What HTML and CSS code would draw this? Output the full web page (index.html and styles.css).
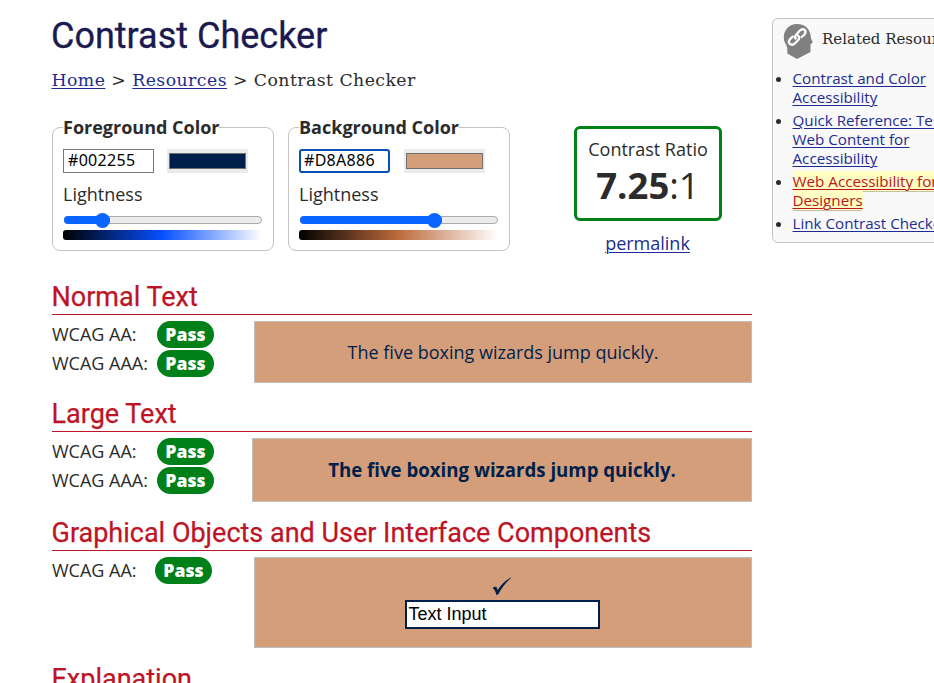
FILE: index.html
```html
<!DOCTYPE html>
<html lang="en">
<head>
<meta charset="utf-8">
<title>Contrast Checker</title>
<link rel="stylesheet" href="styles.css">
</head>
<body>
<div class="page">
  <main class="main">
    <h1>Contrast Checker</h1>
    <nav class="crumbs"><a href="#">Home</a> &gt; <a href="#">Resources</a> &gt; Contrast Checker</nav>
    <div class="controls">
      <fieldset class="color fg">
        <legend>Foreground Color</legend>
        <div class="pick"><div class="hex">#002255</div><div class="well"><div class="swatch"></div></div></div>
        <div class="label">Lightness</div>
        <div class="slider"><div class="fill"><span class="thumb"></span></div></div>
        <div class="ramp"></div>
      </fieldset>
      <fieldset class="color bg">
        <legend>Background Color</legend>
        <div class="pick"><div class="hex focused">#D8A886</div><div class="well"><div class="swatch"></div></div></div>
        <div class="label">Lightness</div>
        <div class="slider"><div class="fill"><span class="thumb"></span></div></div>
        <div class="ramp"></div>
      </fieldset>
      <div class="result">
        <div class="ratio"><div class="ratio-label">Contrast Ratio</div><div class="ratio-value"><b>7.25</b>:1</div></div>
        <a href="#">permalink</a>
      </div>
    </div>

    <h2>Normal Text</h2>
    <section class="test">
      <div class="grades">
        <div class="grade"><span>WCAG AA:</span><b class="pass">Pass</b></div>
        <div class="grade"><span>WCAG AAA:</span><b class="pass">Pass</b></div>
      </div>
      <div class="sample normal">The five boxing wizards jump quickly.</div>
    </section>

    <h2>Large Text</h2>
    <section class="test">
      <div class="grades">
        <div class="grade"><span>WCAG AA:</span><b class="pass">Pass</b></div>
        <div class="grade"><span>WCAG AAA:</span><b class="pass">Pass</b></div>
      </div>
      <div class="sample large">The five boxing wizards jump quickly.</div>
    </section>

    <h2>Graphical Objects and User Interface Components</h2>
    <section class="test">
      <div class="grades single">
        <div class="grade"><span>WCAG AA:</span><b class="pass">Pass</b></div>
      </div>
      <div class="sample objects">
        <svg class="check" width="20" height="19" viewBox="0 0 20 19"><path d="M.8 11.2C2 9.5 4.1 9.3 4.9 10.7L5.6 13.3C8.600 8.300 13 3.500 18.900.6L19.100 1C14 5 9.500 10.800 6.300 17.300L4.600 18.200C3.800 15.600 2.900 12.200.8 11.200Z"/></svg>
        <div class="field">Text Input</div>
      </div>
    </section>

    <h2>Explanation</h2>
  </main>

  <aside class="related">
    <div class="related-head">
      <svg width="30" height="36" viewBox="0 0 30 36">
        <path fill="#808080" d="M14 0C6 0 .8 6 .8 13.500C.8 18.500 4.300 21.500 4.300 24.500V29.500L14 35L27.500 28V20.300L29.800 18.300L28 14.500C28 6 22.500 0 14 0Z"/>
        <g fill="none" stroke="#fff" stroke-width="2.300" stroke-linecap="round" stroke-linejoin="round">
          <path d="M12.600 14.600C11.500 12.700 12.300 11.200 13.700 10L16.700 6.700C20.300 3.200 24.400 7 21.400 10.600L18.600 13"/>
          <path d="M14.700 11.500C17 12.800 16.400 15 14.800 16.500L11.700 19.500C8 22.500 4 19 6.900 15.400L9.700 12.600"/>
        </g>
      </svg>
      <span>Related Resources</span>
    </div>
    <ul>
      <li><a href="#">Contrast and Color<br>Accessibility</a></li>
      <li><a href="#">Quick Reference: Testing<br>Web Content for<br>Accessibility</a></li>
      <li><a class="hot" href="#">Web Accessibility for<br>Designers</a></li>
      <li><a href="#">Link Contrast Checker</a></li>
    </ul>
  </aside>
</div>
</body>
</html>
```
FILE: styles.css
```css
* { box-sizing: border-box; }
html, body { margin: 0; height: 683px; overflow: hidden; }
body { background: #fff; color: #2b2b2b; font: 18px/24px "Open Sans", sans-serif; }
a { color: #1d2c92; text-decoration: underline; text-decoration-thickness: 1px; text-underline-offset: 2px; }
.page { display: flex; gap: 20px; width: 100%; height: 683px; overflow: hidden; padding-left: 52px; }
.main { flex: 0 0 700px; padding-top: 15px; }
h1 { margin: 0 0 0 -1px; font: 400 36px/42px Roboto, sans-serif; color: #1a1a50; -webkit-text-stroke: .3px; white-space: nowrap; }
.crumbs { margin: 11px 0 0 -.5px; font: 17.300px/24px "DejaVu Serif", serif; letter-spacing: .45px; white-space: nowrap; }
.controls { display: flex; height: 167px; margin-top: 23px; }
.color { width: 222px; height: 136px; margin: 0 14px 0 0; padding: 0 10px; border: 1px solid #c3c3c3; border-radius: 8px; }
.color legend { height: 24px; padding: 0; font-weight: 700; white-space: nowrap; }
.pick { display: flex; gap: 13px; margin-top: 10px; }
.bg .pick { gap: 14px; }
.hex { width: 91px; height: 24px; padding-left: 4px; border: 1px solid #767676; background: #fff; color: #000; font: 16px/20px "Noto Sans", sans-serif; letter-spacing: .3px; white-space: nowrap; }
.hex.focused { padding-left: 3px; border: 2px solid #0650b8; border-radius: 3px; line-height: 18px; }
.well { width: 81px; height: 24px; padding: 4px 2px; background: #ebebeb; }
.swatch { height: 16px; border: 1px solid #707070; }
.fg .swatch { background: #001f4b; }
.bg .swatch { background: #d59e7b; }
.label { margin-top: 9px; }
.slider { width: 198px; height: 8px; margin: 10px 0 0 1px; border: 1px solid #aaa; border-radius: 4px; background: #ebebeb; }
.fill { display: flex; justify-content: flex-end; align-items: center; height: 8px; margin: -1px; border-radius: 4px; background: #0865ff; }
.fg .fill { width: 46px; }
.bg .fill { width: 142px; }
.thumb { flex: none; width: 15px; height: 15px; border-radius: 50%; background: #0865ff; }
.ramp { width: 199px; height: 10px; margin-top: 6px; border-radius: 3px; }
.fg .ramp { background: linear-gradient(90deg, #000, #0650ff 50%, #fff); }
.bg .ramp { background: linear-gradient(90deg, #000, #bd6b3d 50%, #fff); }
.result { display: flex; flex-direction: column; align-items: center; width: 148px; margin: 11px 0 0 50px; }
.ratio { width: 148px; height: 95px; padding-top: 8px; border: 3px solid #008018; border-radius: 6px; text-align: center; }
.ratio-label { white-space: nowrap; }
.ratio-value { font-size: 36.500px; line-height: 48px; }
.result a { margin: 10px 1px 0 0; }
h2 { height: 33px; margin: 16px 0 6px; border-bottom: 1px solid #bd1426; color: #bd1426; font: 400 27px/30px Roboto, sans-serif; text-indent: -.5px; -webkit-text-stroke: .25px; white-space: nowrap; }
.controls + h2 { margin-top: 0; }
.test { display: flex; justify-content: space-between; }
.grades { display: flex; flex-direction: column; gap: 2px; }
.grade { display: flex; height: 27px; line-height: 27px; }
.grade span { width: 105px; white-space: nowrap; }
.single .grade span { width: 103px; }
.pass { width: 57px; height: 27px; border-radius: 14px; background: #008018; color: #fff; font-size: 17.600px; font-weight: 800; text-align: center; }
.sample { display: flex; align-items: center; justify-content: center; width: 498px; height: 62px; border: 1px solid #bfbfbf; background: #d59e7b; color: #001f4b; white-space: nowrap; }
.large { width: 500px; height: 64px; font-weight: 700; font-size: 18.660px; }
.objects { flex-direction: column; justify-content: flex-start; height: 91px; padding: 19px 2px 0 0; }
.check { flex: none; fill: #001f4b; }
.field { width: 195px; height: 29px; margin-top: 4px; padding-left: 2px; border: 2px solid #001f4b; background: #fff; color: #000; font: 18px/25px "Liberation Sans", sans-serif; }
.related { flex: none; width: 222px; height: 225px; margin-top: 18px; padding: 5px 0 0 10px; border: 1px solid #c3c3c3; border-radius: 6px; background: #f9f9f9; }
.related-head { display: flex; gap: 9px; height: 36px; font: 15px/30px "DejaVu Serif", serif; white-space: nowrap; }
.related-head svg { flex: none; }
ul { margin: 9px 0 0; padding: 0 0 0 9.500px; font-size: 15.200px; line-height: 19px; white-space: nowrap; }
li { margin-bottom: 4px; }
.hot { padding: 0; background: #ffffc3; color: #bd1426; border-bottom: 1px solid #c3c3a0; border-radius: 3px; }
```
